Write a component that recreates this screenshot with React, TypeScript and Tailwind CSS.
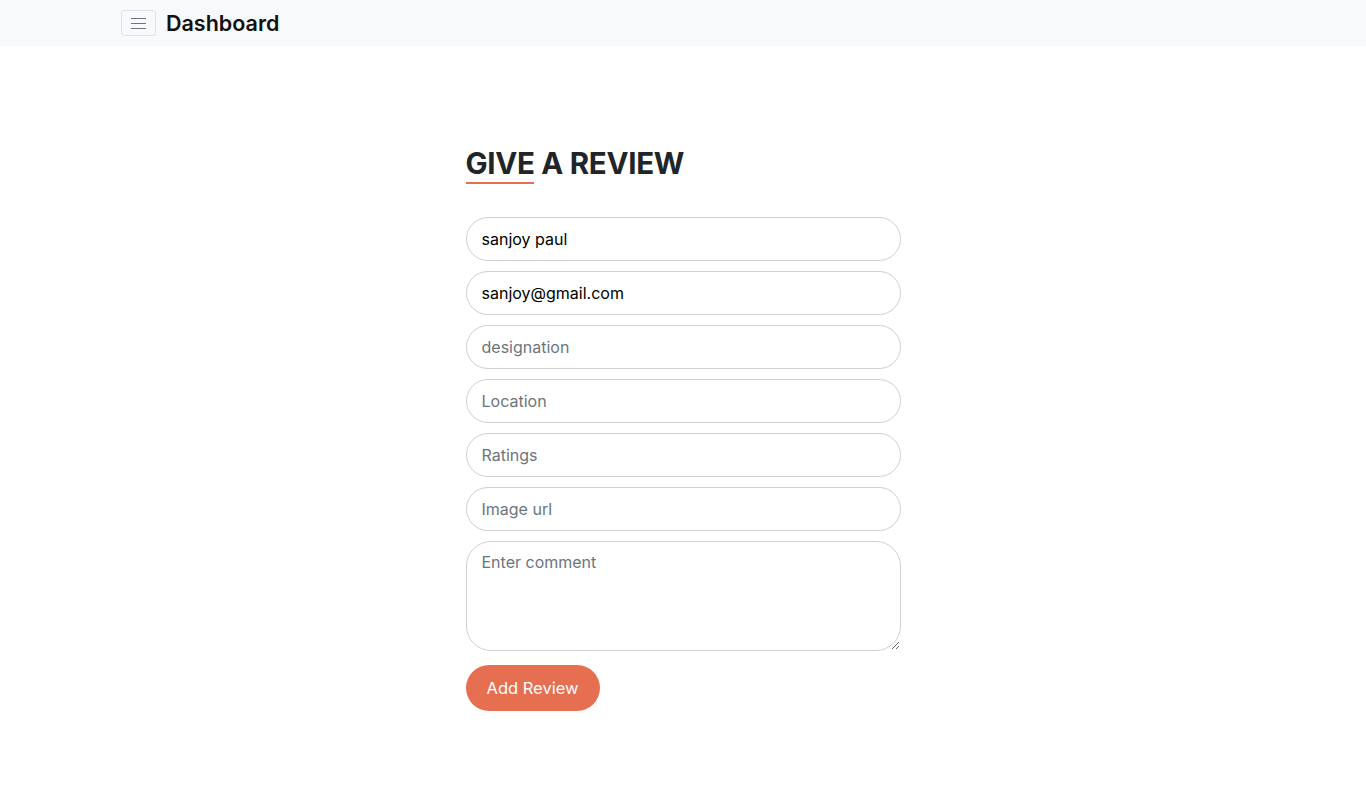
import React from "react";

export default function App() {
  const font = { fontFamily: "Inter, 'Noto Sans', sans-serif" };
  const inputCls =
    "h-[44px] rounded-full border border-[#d0d0d0] px-[15px] text-[16px] text-black placeholder:text-[#6c757d] outline-none";
  return (
    <div className="min-h-[811px] bg-white text-[#212529]" style={font}>
      <nav className="h-[46px] bg-[#f8f9fa] flex items-center pl-[121px]">
        <button className="w-[35px] h-[26px] border border-[#dee2e6] rounded-[3px] flex items-center justify-center bg-transparent">
          <svg width="17" height="13" viewBox="0 0 17 13">
            <path d="M1 1.5h15M1 6.5h15M1 11.5h15" stroke="#6c757d" strokeWidth="1.2" />
          </svg>
        </button>
        <span className="ml-[10px] text-[21.5px] font-semibold text-[#111]">Dashboard</span>
      </nav>
      <div className="flex justify-center pt-[97px]">
        <div className="w-[435px]">
          <h2 className="text-[29.5px] font-bold leading-[40px] text-[#212529] tracking-[-0.3px]">GIVE A REVIEW</h2>
          <div className="w-[68px] h-[2px] bg-[#e76f51] mt-[-1px]"></div>
          <form className="mt-[33px] flex flex-col gap-[10px]">
            <input className={inputCls} defaultValue="sanjoy paul" />
            <input className={inputCls} defaultValue="sanjoy@gmail.com" />
            <input className={inputCls} placeholder="designation" />
            <input className={inputCls} placeholder="Location" />
            <input className={inputCls} placeholder="Ratings" />
            <input className={inputCls} placeholder="Image url" />
            <textarea
              className="h-[110px] rounded-[25px] border border-[#d0d0d0] px-[15px] py-[8px] text-[16px] placeholder:text-[#6c757d] outline-none"
              placeholder="Enter comment"
            />
            <div className="mt-[4px]">
              <button type="button" className="w-[134px] h-[46px] rounded-full bg-[#e76f51] text-white text-[16.5px]">
                Add Review
              </button>
            </div>
          </form>
        </div>
      </div>
    </div>
  );
}
